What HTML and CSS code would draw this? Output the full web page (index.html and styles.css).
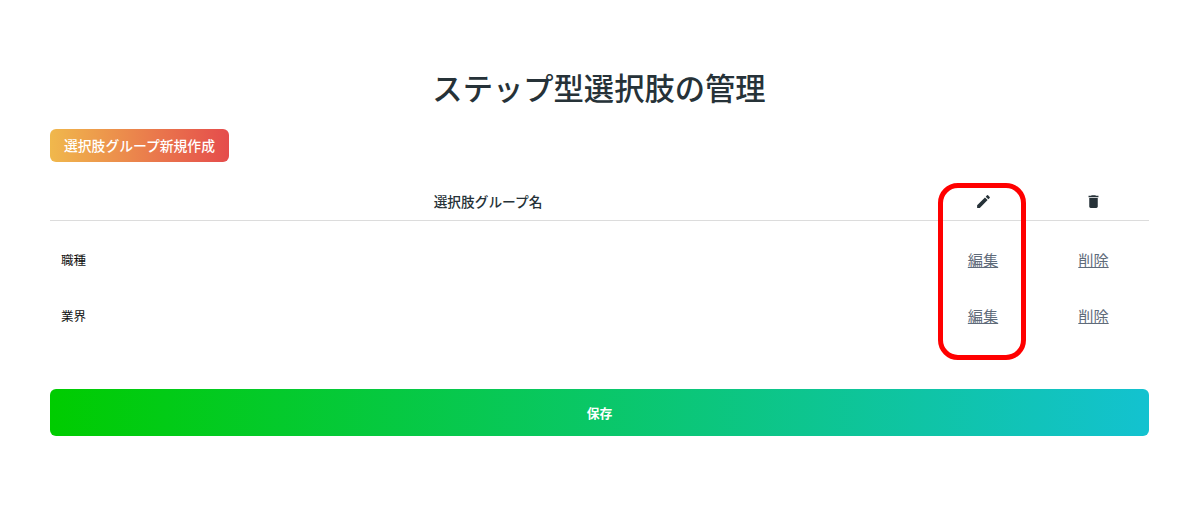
FILE: index.html
```html
<!DOCTYPE html>
<html lang="ja">
<head>
	<meta charset="UTF-8">
	<title>ステップ型選択肢の管理</title>
	<link rel="stylesheet" href="styles.css">
</head>
<body>
	<div class="page">
		<h1 class="title">ステップ型選択肢の管理</h1>
		<a class="btn-new">選択肢グループ新規作成</a>
		<div class="table">
			<div class="row head">
				<div class="name">選択肢グループ名</div>
				<div class="cell">
					<svg class="icon" viewBox="0 0 24 24"><path d="M3 17.25V21h3.75L17.81 9.94l-3.75-3.75L3 17.25zM20.71 7.04a1 1 0 0 0 0-1.41l-2.34-2.34a1 1 0 0 0-1.41 0l-1.83 1.83 3.75 3.75 1.83-1.83z"/></svg>
				</div>
				<div class="cell">
					<svg class="icon" viewBox="0 0 24 24"><path d="M6 19c0 1.1.9 2 2 2h8c1.1 0 2-.9 2-2V7H6v12zM19 4h-3.5l-1-1h-5l-1 1H5v2h14V4z"/></svg>
				</div>
			</div>
			<div class="row">
				<div class="label">職種</div>
				<div class="cell"><a class="link">編集</a></div>
				<div class="cell"><a class="link">削除</a></div>
			</div>
			<div class="row">
				<div class="label">業界</div>
				<div class="cell"><a class="link">編集</a></div>
				<div class="cell"><a class="link">削除</a></div>
			</div>
		</div>
		<a class="btn-save">保存</a>
	</div>
	<div class="mark"></div>
</body>
</html>
```

FILE: styles.css
```css
* {
	margin: 0;
	padding: 0;
	box-sizing: border-box;
}
body {
	background: #fff;
	color: #263238;
	font-family: "Noto Sans CJK JP", "Noto Sans", sans-serif;
}
.page {
	padding: 67px 30px 0 50px;
	display: flex;
	flex-direction: column;
}
.title {
	font-size: 30.3px;
	line-height: 40px;
	font-weight: 500;
	text-align: center;
	margin-bottom: 22px;
	padding-right: 1px;
}
.btn-new {
	align-self: flex-start;
	width: 179px;
	height: 33px;
	line-height: 33px;
	text-align: center;
	font-size: 13.8px;
	font-weight: 500;
	color: #fff;
	border-radius: 6px;
	background: linear-gradient(90deg, #f0b84c, #e54c4c);
}
.table {
	margin-top: 20px;
}
.row {
	display: grid;
	grid-template-columns: 1fr 110px 111px;
	align-items: center;
	height: 55.5px;
}
.row.head {
	height: 39px;
	margin-bottom: 11px;
	border-bottom: 1px solid #dcdcdc;
}
.name {
	text-align: center;
	font-size: 13.7px;
	font-weight: 500;
	padding-right: 2px;
}
.cell {
	display: flex;
	justify-content: center;
}
.icon {
	width: 17px;
	height: 17px;
	fill: #263238;
}
.label {
	padding-left: 11px;
	font-size: 12.5px;
	color: #111;
}
.link {
	display: block;
	line-height: 21px;
	font-size: 15.2px;
	color: #5f6b7a;
	text-decoration: underline;
}
.btn-save {
	margin-top: 46px;
	height: 47px;
	line-height: 47px;
	text-align: center;
	font-size: 12.8px;
	font-weight: 700;
	color: #fff;
	border-radius: 6px;
	background: linear-gradient(90deg, #00cc00, #13c2d0);
}
/* annotation drawn over the table */
.mark {
	position: absolute;
	left: 938px;
	top: 183px;
	width: 88px;
	height: 177px;
	border: 5px solid #f00;
	border-radius: 20px;
}
```
